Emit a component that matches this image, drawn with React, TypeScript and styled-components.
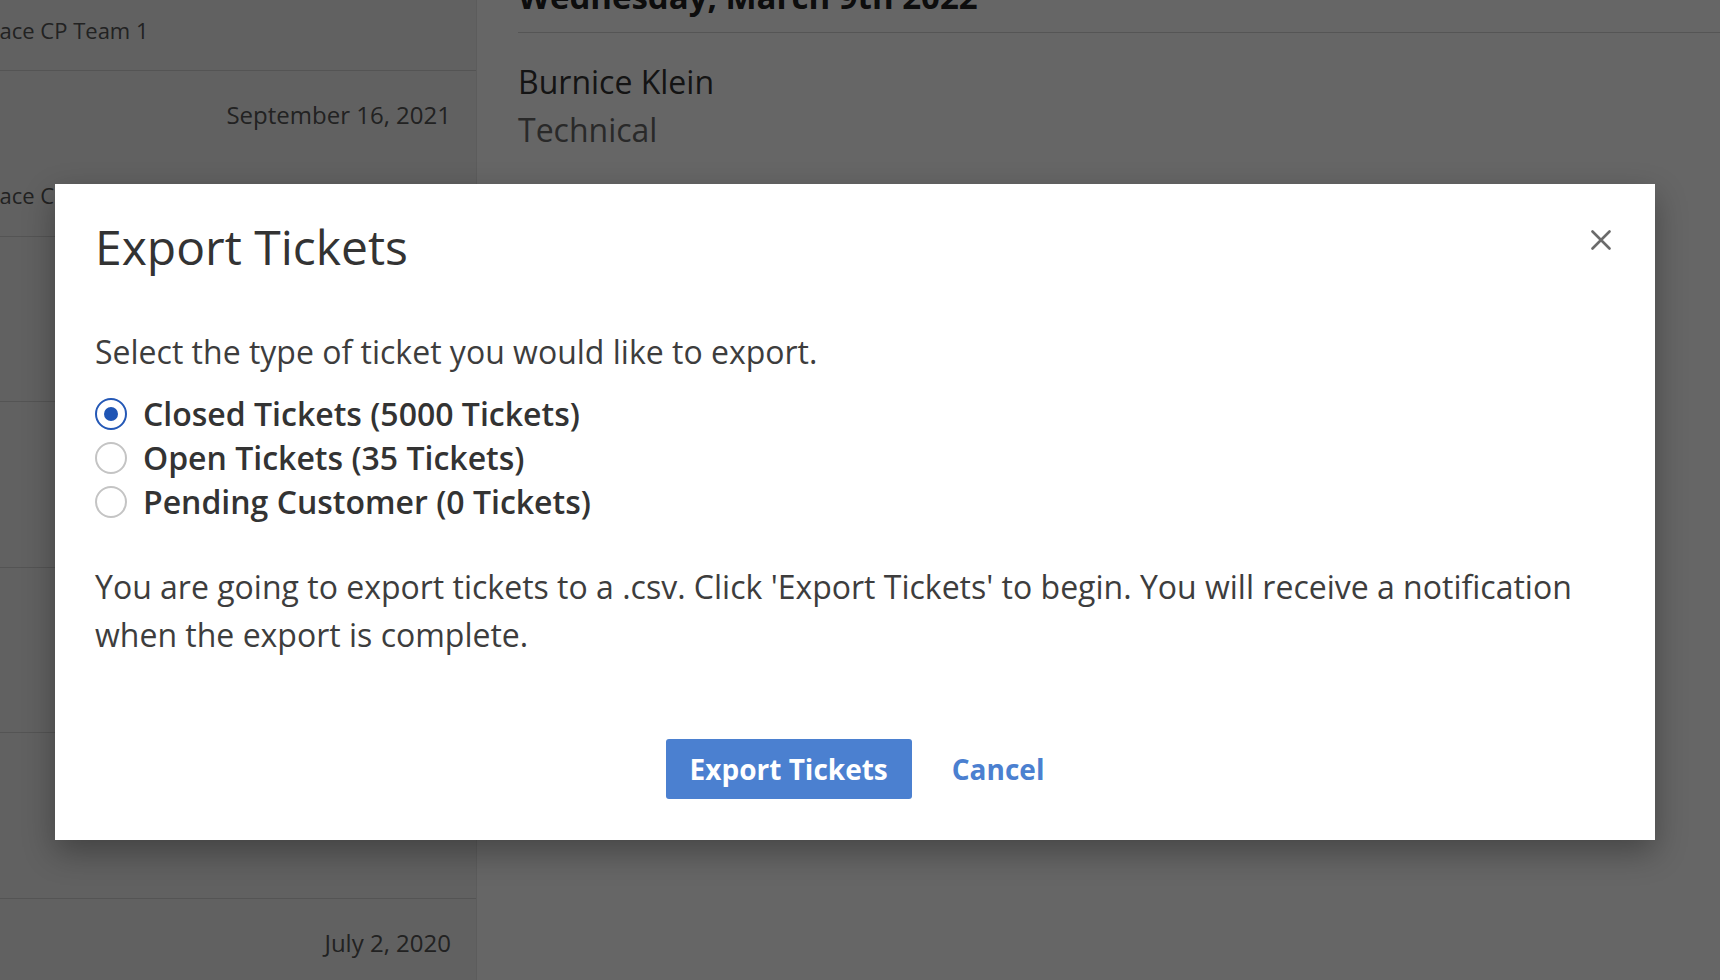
import React, { useState } from "react";
import styled, { createGlobalStyle } from "styled-components";

const GlobalStyle = createGlobalStyle`
  html, body {
    margin: 0;
    padding: 0;
  }
  body {
    width: 1720px;
    height: 980px;
    overflow: hidden;
    background: #ffffff;
    font-family: "Open Sans", "Liberation Sans", sans-serif;
  }
  *, *::before, *::after {
    box-sizing: border-box;
  }
`;

const Page = styled.div`
  position: relative;
  display: flex;
  width: 1720px;
  height: 980px;
  overflow: hidden;
  background: #ffffff;
`;

const ListPanel = styled.aside`
  flex: none;
  width: 477px;
  height: 100%;
  background: #f3f3f3;
  border-right: 1px solid #e6e6e6;
  overflow: hidden;
`;

const RowList = styled.div`
  display: flex;
  flex-direction: column;
  margin-top: -94.5px;
`;

const Row = styled.div`
  flex: none;
  height: 165.5px;
  display: flex;
  flex-direction: column;
  gap: 44px;
  padding: 26px 25px 0 0;
  border-bottom: 1px solid #d3d3d3;
  font-size: 24px;
  line-height: 36px;
  color: #555555;
`;

const RowDate = styled.div`
  text-align: right;
  white-space: nowrap;
`;

const RowName = styled.div`
  margin-left: -26px;
  font-size: 22px;
  white-space: nowrap;
`;

const DetailPanel = styled.main`
  flex: 1;
  min-width: 0;
  padding-left: 41px;
  overflow: hidden;
`;

const DayHeading = styled.h2`
  margin: -27px 0 0;
  padding-bottom: 11px;
  border-bottom: 1px solid #d5d5d5;
  font-size: 33px;
  line-height: 48px;
  font-weight: 700;
  color: #222222;
  white-space: nowrap;
`;

const Contact = styled.div`
  margin-top: 25px;
  font-size: 32px;
  line-height: 48px;
`;

const ContactName = styled.div`
  color: #333333;
`;

const ContactRole = styled.div`
  color: #686868;
`;

const Overlay = styled.div`
  position: absolute;
  inset: 0;
  background: rgba(0, 0, 0, 0.6);
  padding: 184px 0 0 55px;
`;

const Modal = styled.div`
  width: 1600px;
  background: #ffffff;
  box-shadow: 0 12px 30px rgba(0, 0, 0, 0.32);
  padding: 34.4px 40px 41px 40px;
  display: flex;
  flex-direction: column;
`;

const ModalHeader = styled.div`
  display: flex;
  justify-content: space-between;
  align-items: flex-start;
`;

const Title = styled.h1`
  margin: 0;
  font-size: 48px;
  line-height: 58px;
  font-weight: 400;
  color: #333333;
`;

const CloseButton = styled.button`
  margin-top: 7.6px;
  width: 28px;
  height: 28px;
  padding: 0;
  border: 0;
  background: none;
  display: flex;
  align-items: center;
  justify-content: center;
  cursor: pointer;
`;

const Lead = styled.p`
  margin: 51.2px 0 0;
  font-size: 32px;
  line-height: 48px;
  color: #3d3d3d;
`;

const RadioGroup = styled.div`
  margin-top: 16px;
  display: flex;
  flex-direction: column;
`;

const RadioRow = styled.label`
  height: 44px;
  display: flex;
  align-items: center;
  gap: 16px;
  font-size: 32px;
  line-height: 44px;
  font-weight: 600;
  color: #333333;
  cursor: pointer;
`;

const RadioCircle = styled.span<{ $checked: boolean }>`
  flex: none;
  width: 32px;
  height: 32px;
  border-radius: 50%;
  border: 2px solid ${(p) => (p.$checked ? "#2458b6" : "#c4c4c4")};
  display: flex;
  align-items: center;
  justify-content: center;
  background: #ffffff;

  &::after {
    content: "";
    width: 14px;
    height: 14px;
    border-radius: 50%;
    background: ${(p) => (p.$checked ? "#1f55b5" : "transparent")};
  }
`;

const Body = styled.p`
  margin: 39.3px 0 0;
  font-size: 32px;
  line-height: 48px;
  color: #3d3d3d;
`;

const Actions = styled.div`
  margin-top: 80.1px;
  display: flex;
  justify-content: center;
  align-items: center;
  gap: 40px;
`;

const PrimaryButton = styled.button`
  height: 60px;
  padding: 0 24px;
  border: 0;
  border-radius: 3px;
  background: #4b80d0;
  color: #ffffff;
  font-family: "Open Sans", "Liberation Sans", sans-serif;
  font-size: 28px;
  font-weight: 700;
  cursor: pointer;
`;

const LinkButton = styled.button`
  padding: 0;
  border: 0;
  background: none;
  color: #4b80d0;
  font-family: "Open Sans", "Liberation Sans", sans-serif;
  font-size: 28px;
  font-weight: 700;
  cursor: pointer;
`;

const rows = [
  { date: "October 4, 2021", name: "Space CP Team 1" },
  { date: "September 16, 2021", name: "Space CP Team 1" },
  { date: "August 30, 2021", name: "" },
  { date: "May 12, 2021", name: "" },
  { date: "March 3, 2021", name: "" },
  { date: "November 18, 2020", name: "" },
  { date: "July 2, 2020", name: "" },
];

const options = [
  { id: "closed", label: "Closed Tickets (5000 Tickets)" },
  { id: "open", label: "Open Tickets (35 Tickets)" },
  { id: "pending", label: "Pending Customer (0 Tickets)" },
];

export default function App() {
  const [selected, setSelected] = useState("closed");

  return (
    <>
      <GlobalStyle />
      <Page>
        <ListPanel>
          <RowList>
            {rows.map((r, i) => (
              <Row key={i}>
                <RowDate>{r.date}</RowDate>
                {r.name && <RowName>{r.name}</RowName>}
              </Row>
            ))}
          </RowList>
        </ListPanel>
        <DetailPanel>
          <DayHeading>Wednesday, March 9th 2022</DayHeading>
          <Contact>
            <ContactName>Burnice Klein</ContactName>
            <ContactRole>Technical</ContactRole>
          </Contact>
        </DetailPanel>

        <Overlay>
          <Modal role="dialog" aria-label="Export Tickets">
            <ModalHeader>
              <Title>Export Tickets</Title>
              <CloseButton aria-label="Close">
                <svg width="20" height="20" viewBox="0 0 20 20" fill="none">
                  <path
                    d="M1.5 1.5 L18.5 18.5 M18.5 1.5 L1.5 18.5"
                    stroke="#6b6b6b"
                    strokeWidth="2.6"
                    strokeLinecap="round"
                  />
                </svg>
              </CloseButton>
            </ModalHeader>
            <Lead>Select the type of ticket you would like to export.</Lead>
            <RadioGroup role="radiogroup">
              {options.map((o) => (
                <RadioRow key={o.id} onClick={() => setSelected(o.id)}>
                  <RadioCircle $checked={selected === o.id} />
                  {o.label}
                </RadioRow>
              ))}
            </RadioGroup>
            <Body>
              You are going to export tickets to a .csv. Click 'Export Tickets' to begin. You will
              receive a notification when the export is complete.
            </Body>
            <Actions>
              <PrimaryButton>Export Tickets</PrimaryButton>
              <LinkButton>Cancel</LinkButton>
            </Actions>
          </Modal>
        </Overlay>
      </Page>
    </>
  );
}
